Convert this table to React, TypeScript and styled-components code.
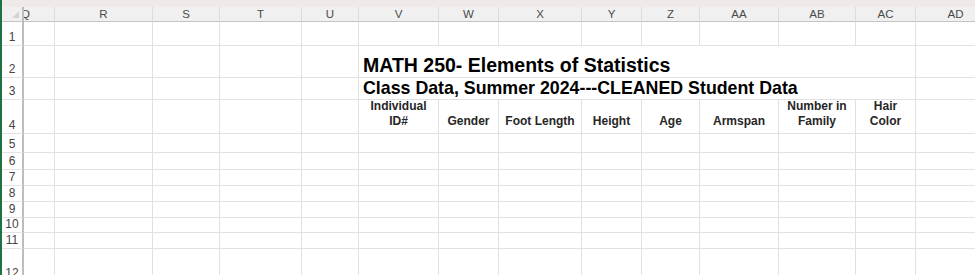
import React from 'react';
import styled, {createGlobalStyle} from 'styled-components';

const GlobalStyle = createGlobalStyle`
    html, body {
        margin: 0;
        padding: 0;
        background: #ffffff;
        overflow: hidden;
    }
    body {
        font-family: "Liberation Sans", Arial, sans-serif;
    }
`;

type Column = { name: string, width: number };

const columns: Column[] = [
    {name: 'Q', width: 31},
    {name: 'R', width: 98},
    {name: 'S', width: 67},
    {name: 'T', width: 82},
    {name: 'U', width: 57},
    {name: 'V', width: 80},
    {name: 'W', width: 60},
    {name: 'X', width: 83},
    {name: 'Y', width: 60},
    {name: 'Z', width: 58},
    {name: 'AA', width: 79},
    {name: 'AB', width: 77},
    {name: 'AC', width: 60},
    {name: 'AD', width: 80},
];

// row heights, header band first
const rowHeights = [15, 24, 32, 22, 34, 19, 17, 16, 16, 16, 15, 16, 33];

const fieldHeaders: { [col: string]: string[] } = {
    V: ['Individual', 'ID#'],
    W: ['Gender'],
    X: ['Foot Length'],
    Y: ['Height'],
    Z: ['Age'],
    AA: ['Armspan'],
    AB: ['Number in', 'Family'],
    AC: ['Hair', 'Color'],
};

const Window = styled.div`
    width: 975px;
    height: 275px;
    overflow: hidden;
    display: flex;
    flex-direction: column;
    border-left: 2px solid #1f7244;
    box-sizing: border-box;
`;

const TopBand = styled.div`
    height: 7px;
    flex: none;
    background: #efeae8;
`;

const Grid = styled.div<{ $cols: string, $rows: string }>`
    display: grid;
    grid-template-columns: ${p => p.$cols};
    grid-template-rows: ${p => p.$rows};
`;

const Corner = styled.div`
    position: relative;
    background: #f0f0f0;
    border-right: 2px solid #bdbdbd;
    border-bottom: 1px solid #c4c4c4;
    box-sizing: border-box;

    &::after {
        content: "";
        position: absolute;
        right: 3px;
        bottom: 3px;
        width: 0;
        height: 0;
        border-left: 7px solid transparent;
        border-bottom: 7px solid #d3d3d3;
    }
`;

const ColHead = styled.div<{ $clip?: boolean }>`
    display: flex;
    align-items: center;
    justify-content: ${p => p.$clip ? 'flex-start' : 'center'};
    overflow: hidden;
    background: #f0f0f0;
    border-right: 1px solid #dcdcdc;
    border-bottom: 1px solid #c4c4c4;
    box-sizing: border-box;
    font-size: 11.5px;
    color: #4a4a4a;
    white-space: nowrap;

    span {
        margin-left: ${p => p.$clip ? '-3px' : '0'};
    }
`;

const RowHead = styled.div`
    display: flex;
    align-items: flex-end;
    justify-content: center;
    background: #ffffff;
    border-right: 2px solid #bdbdbd;
    border-bottom: 1px solid #e3e3e3;
    box-sizing: border-box;
    font-size: 12px;
    line-height: 14px;
    color: #444444;
    padding-bottom: 1px;
`;

const Cell = styled.div<{ $span?: number }>`
    grid-column: ${p => p.$span ? `span ${p.$span}` : 'auto'};
    display: flex;
    align-items: flex-end;
    border-right: 1px solid #e1e1e1;
    border-bottom: 1px solid #e1e1e1;
    box-sizing: border-box;
    overflow: hidden;
    white-space: nowrap;
`;

const Title = styled.span<{ $size: number }>`
    font-weight: bold;
    font-size: ${p => p.$size}px;
    line-height: normal;
    color: #000000;
    padding-left: 4px;
`;

const FieldHeader = styled.div`
    width: 100%;
    text-align: center;
    font-weight: bold;
    font-size: 12px;
    line-height: 15px;
    color: #262626;
    padding-bottom: 4px;
`;

const titleStart = columns.findIndex(c => c.name === 'V');
const titleEnd = columns.findIndex(c => c.name === 'AC');

function TitleRow({size, text}: { size: number, text: string }) {
    return (
        <>
            {columns.slice(0, titleStart).map(c => <Cell key={c.name} />)}
            <Cell $span={titleEnd - titleStart + 1}>
                <Title $size={size}>{text}</Title>
            </Cell>
            {columns.slice(titleEnd + 1).map(c => <Cell key={c.name} />)}
        </>
    );
}

const App: React.FC = () => {
    const cols = ['22px', ...columns.map(c => `${c.width}px`)].join(' ');
    const rows = rowHeights.map(h => `${h}px`).join(' ');

    return (
        <>
            <GlobalStyle />
            <Window>
                <TopBand />
                <Grid $cols={cols} $rows={rows}>
                    <Corner />
                    {columns.map((c, i) => (
                        <ColHead key={c.name} $clip={i === 0}>
                            <span>{c.name}</span>
                        </ColHead>
                    ))}

                    {rowHeights.slice(1).map((_, r) => {
                        const rowNum = r + 1;
                        let content: React.ReactNode;
                        if (rowNum === 2) {
                            content = <TitleRow size={19.5} text="MATH 250- Elements of Statistics" />;
                        } else if (rowNum === 3) {
                            content = <TitleRow size={17.8} text="Class Data, Summer 2024---CLEANED Student Data" />;
                        } else if (rowNum === 4) {
                            content = columns.map(c => (
                                <Cell key={c.name}>
                                    {fieldHeaders[c.name] &&
                                        <FieldHeader>
                                            {fieldHeaders[c.name].map(line => <div key={line}>{line}</div>)}
                                        </FieldHeader>
                                    }
                                </Cell>
                            ));
                        } else {
                            content = columns.map(c => <Cell key={c.name} />);
                        }
                        return (
                            <React.Fragment key={rowNum}>
                                <RowHead>{rowNum}</RowHead>
                                {content}
                            </React.Fragment>
                        );
                    })}
                </Grid>
            </Window>
        </>
    );
};

export default App;
